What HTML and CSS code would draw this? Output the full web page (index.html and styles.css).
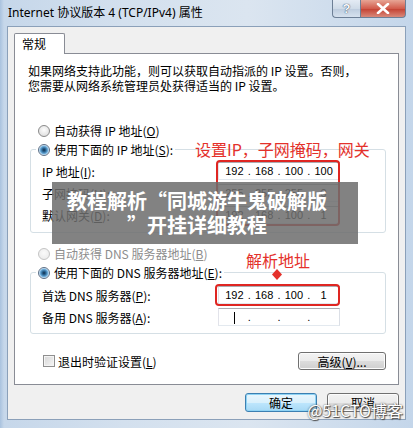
FILE: index.html
```html
<!DOCTYPE html>
<html lang="zh-CN">
<head>
    <meta charset="UTF-8">
    <title>Internet 协议版本 4 (TCP/IPv4) 属性</title>
    <link rel="stylesheet" href="styles.css">
</head>
<body>
    <div class="window">
        <div class="titlebar">
            <span class="title">Internet 协议版本 4 (TCP/IPv4) 属性</span>
            <div class="caption">
                <span class="cap help">?</span>
                <span class="cap close">
                    <svg width="14" height="11" viewBox="0 0 14 11"><path d="M2 1 L12 10 M12 1 L2 10" stroke="#fff" stroke-width="2.6" stroke-linecap="round"/></svg>
                </span>
            </div>
        </div>

        <div class="client">
            <div class="tabs"><span class="tab">常规</span></div>
            <div class="panel">
                <p class="intro">如果网络支持此功能，则可以获取自动指派的 IP 设置。否则，<br>您需要从网络系统管理员处获得适当的 IP 设置。</p>

                <div class="radio-row first"><span class="radio"></span>自动获得 IP 地址(<u>O</u>)</div>
                <fieldset class="group">
                    <legend><span class="legend-inner"><span class="radio checked"></span>使用下面的 IP 地址(<u>S</u>):</span></legend>
                    <div class="rows">
                        <span>IP 地址(<u>I</u>):</span>
                        <div class="ip"><span>192</span><i>.</i><span>168</span><i>.</i><span>100</span><i>.</i><span>100</span></div>
                        <span>子网掩码(<u>U</u>):</span>
                        <div class="ip"><span>255</span><i>.</i><span>255</span><i>.</i><span>255</span><i>.</i><span>0</span></div>
                        <span>默认网关(<u>D</u>):</span>
                        <div class="ip"><span>192</span><i>.</i><span>168</span><i>.</i><span>100</span><i>.</i><span>1</span></div>
                    </div>
                </fieldset>

                <div class="radio-row second disabled"><span class="radio"></span>自动获得 DNS 服务器地址(<u>B</u>)</div>
                <fieldset class="group">
                    <legend><span class="legend-inner"><span class="radio checked"></span>使用下面的 DNS 服务器地址(<u>E</u>):</span></legend>
                    <div class="rows dns">
                        <span>首选 DNS 服务器(<u>P</u>):</span>
                        <div class="ip"><span>192</span><i>.</i><span>168</span><i>.</i><span>100</span><i>.</i><span>1</span></div>
                        <span>备用 DNS 服务器(<u>A</u>):</span>
                        <div class="ip"><span><b class="caret"></b></span><i>.</i><span></span><i>.</i><span></span><i>.</i><span></span></div>
                    </div>
                </fieldset>

                <div class="options">
                    <span class="check-row"><span class="checkbox"></span>退出时验证设置(<u>L</u>)</span>
                    <span class="btn advanced">高级(<u>V</u>)...</span>
                </div>

                <span class="note note-ip">设置IP，子网掩码，网关</span>
                <span class="mark mark-ip"></span>
                <span class="note note-dns">解析地址</span>
                <svg class="arrow" width="10" height="11" viewBox="0 0 10 11"><path d="M5 0 L10 5.5 L5 11 L0 5.5 Z" fill="#e4312b"/></svg>
                <span class="mark mark-dns"></span>
            </div>
            <div class="actions">
                <span class="btn default">确定</span>
                <span class="btn">取消</span>
            </div>
        </div>

        <div class="banner">教程解析“同城游牛鬼破解版<br>”开挂详细教程</div>
        <div class="watermark">@51CTO博客</div>
    </div>
</body>
</html>
```

FILE: styles.css
```css
* {
    box-sizing: border-box;
}
body {
    margin: 0;
    font-family: "Noto Sans CJK SC", sans-serif;
    font-size: 12px;
    color: #000;
}
.window {
    position: relative;
    width: 413px;
    height: 428px;
    display: flex;
    flex-direction: column;
    overflow: hidden;
    background: linear-gradient(90deg, #a9c2de 0, #c6d7ea 4px, #d3e0ee 30%, #dbe5f0 60%, #c4d6ea 100%);
}
.titlebar {
    height: 26px;
    display: flex;
    justify-content: space-between;
    align-items: flex-start;
    padding: 0 7px 0 8px;
}
.title {
    padding-top: 5px;
    line-height: 16px;
    font-family: "Noto Sans", "Noto Sans CJK SC", sans-serif;
    font-size: 12px;
}
.caption {
    display: flex;
}
.cap {
    height: 18px;
    display: flex;
    align-items: center;
    justify-content: center;
    border: 1px solid #6d7f96;
    border-top: none;
}
.help {
    width: 28px;
    border-right: none;
    border-radius: 0 0 0 4px;
    background: linear-gradient(#e4ebf4, #cfdbe8 50%, #bccbdd 51%, #d6e1ee);
    color: #f7f9fc;
    font-family: "Liberation Sans", sans-serif;
    font-weight: 700;
    font-size: 13px;
    text-shadow: 0 0 1px #3f516a, 0 0 1px #3f516a;
}
.close {
    width: 46px;
    border-radius: 0 0 4px 0;
    background: linear-gradient(#e7a595, #d25c4c 50%, #c33f30 51%, #d9897a);
}
.client {
    flex: 1;
    margin: 0 7px 8px;
    background: #f0f0f0;
    border: 1px solid #8ba0b9;
    padding: 6px 6px 7px 6px;
    display: flex;
    flex-direction: column;
}
.tabs {
    display: flex;
}
.tab {
    position: relative;
    z-index: 1;
    width: 51px;
    height: 21px;
    margin-bottom: -1px;
    padding-left: 7px;
    line-height: 20px;
    background: #fff;
    border: 1px solid #898c95;
    border-bottom: none;
    border-radius: 2px 2px 0 0;
}
.panel {
    position: relative;
    flex: 1;
    display: flex;
    flex-direction: column;
    background: #fff;
    border: 1px solid #898c95;
    padding-top: 9px;
}
.intro {
    margin: 0 0 0 13px;
    line-height: 15px;
}
.radio-row {
    display: flex;
    align-items: center;
    height: 15px;
    margin-left: 23px;
}
.radio-row.first {
    margin-top: 30px;
}
.radio-row.second {
    margin-top: 13px;
}
.disabled {
    color: #8d8d8d;
}
.radio {
    width: 12px;
    height: 12px;
    margin-right: 4px;
    border-radius: 50%;
    border: 1px solid #8a8a8a;
    background: radial-gradient(circle at 50% 40%, #fdfdfd, #d8d8d8);
}
.disabled .radio {
    border-color: #c4c4c4;
    background: radial-gradient(circle at 50% 40%, #fafafa, #e8e8e8);
}
.radio.checked {
    border-color: #5c6f86;
    background: radial-gradient(circle, #0f2c48 0, #2d6a9a 2px, #7ab8e4 4px, #e8f2fa 5px, #d6dee6 6px);
}
.group {
    margin: 4px 12px 0 15px;
    padding: 0 45px 8px 5px;
    border: 1px solid #d5dfe5;
    border-radius: 3px;
    min-width: 0;
}
.group legend {
    padding: 0 2px;
    height: 15px;
    line-height: 15px;
}
.legend-inner {
    display: inline-flex;
    align-items: center;
    height: 15px;
}
.rows {
    display: grid;
    grid-template-columns: 1fr 122px;
    row-gap: 4px;
    align-items: center;
    padding: 5px 0 0 6px;
}
.rows.dns {
    padding-top: 6px;
}
.group:last-of-type {
    padding-bottom: 7px;
}
.ip {
    height: 18px;
    display: grid;
    grid-template-columns: 1fr auto 1fr auto 1fr auto 1fr;
    align-items: center;
    padding: 0 2px;
    background: #fff;
    border: 1px solid;
    border-color: #abadb3 #dbdfe6 #e3e9ef #e2e3ea;
    font-family: "Liberation Sans", sans-serif;
    font-size: 11px;
    text-align: center;
}
.ip i {
    font-style: normal;
}
.caret {
    display: inline-block;
    width: 1px;
    height: 12px;
    vertical-align: middle;
    background: #000;
}
.options {
    display: flex;
    justify-content: space-between;
    align-items: center;
    margin: 18px 12px 0 28px;
}
.check-row {
    display: flex;
    align-items: center;
}
.checkbox {
    width: 12px;
    height: 12px;
    margin-right: 3px;
    border: 1px solid #8f8f8f;
    background: linear-gradient(135deg, #d6d6d6, #f6f6f6);
    box-shadow: inset 0 0 0 1px #f4f4f4;
}
.btn {
    display: flex;
    align-items: center;
    justify-content: center;
    width: 72px;
    height: 19px;
    border: 1px solid #707070;
    border-radius: 3px;
    background: linear-gradient(#f3f3f3, #ebebeb 50%, #dddddd 51%, #cfcfcf);
    box-shadow: inset 0 0 0 1px #fcfcfc;
}
.btn.advanced {
    width: 88px;
    height: 18px;
}
.btn.default {
    border-color: #3c7fb1;
    background: linear-gradient(#eaf6fd, #d9f0fc 50%, #bee6fd 51%, #a7d9f5);
    box-shadow: inset 0 0 0 1px #8fd3f4;
}
.actions {
    display: flex;
    justify-content: flex-end;
    gap: 10px;
    margin-top: 8px;
}
.note {
    position: absolute;
    color: #e4312b;
    font-size: 16px;
    line-height: 20px;
}
.note-ip {
    left: 180px;
    top: 85px;
}
.note-dns {
    left: 231px;
    top: 196px;
}
.arrow {
    position: absolute;
    left: 257px;
    top: 215px;
}
.mark {
    position: absolute;
    border: 2.5px solid #df2622;
    border-radius: 4px;
}
.mark-ip {
    left: 201px;
    top: 106px;
    width: 124px;
    height: 66px;
}
.mark-dns {
    left: 200px;
    top: 230px;
    width: 125px;
    height: 22px;
}
.banner {
    position: absolute;
    left: 52px;
    top: 182px;
    width: 306px;
    padding: 7px 16px 7px 0;
    background: rgba(110, 110, 110, 0.86);
    color: #fff;
    font-size: 20px;
    font-weight: 700;
    line-height: 24px;
    text-align: center;
}
.watermark {
    position: absolute;
    right: 10px;
    bottom: 8px;
    color: #fff;
    font-size: 16px;
    line-height: 20px;
    text-shadow: 0 0 2px #4a4a4a, 1px 1px 1px #4a4a4a;
}
```
